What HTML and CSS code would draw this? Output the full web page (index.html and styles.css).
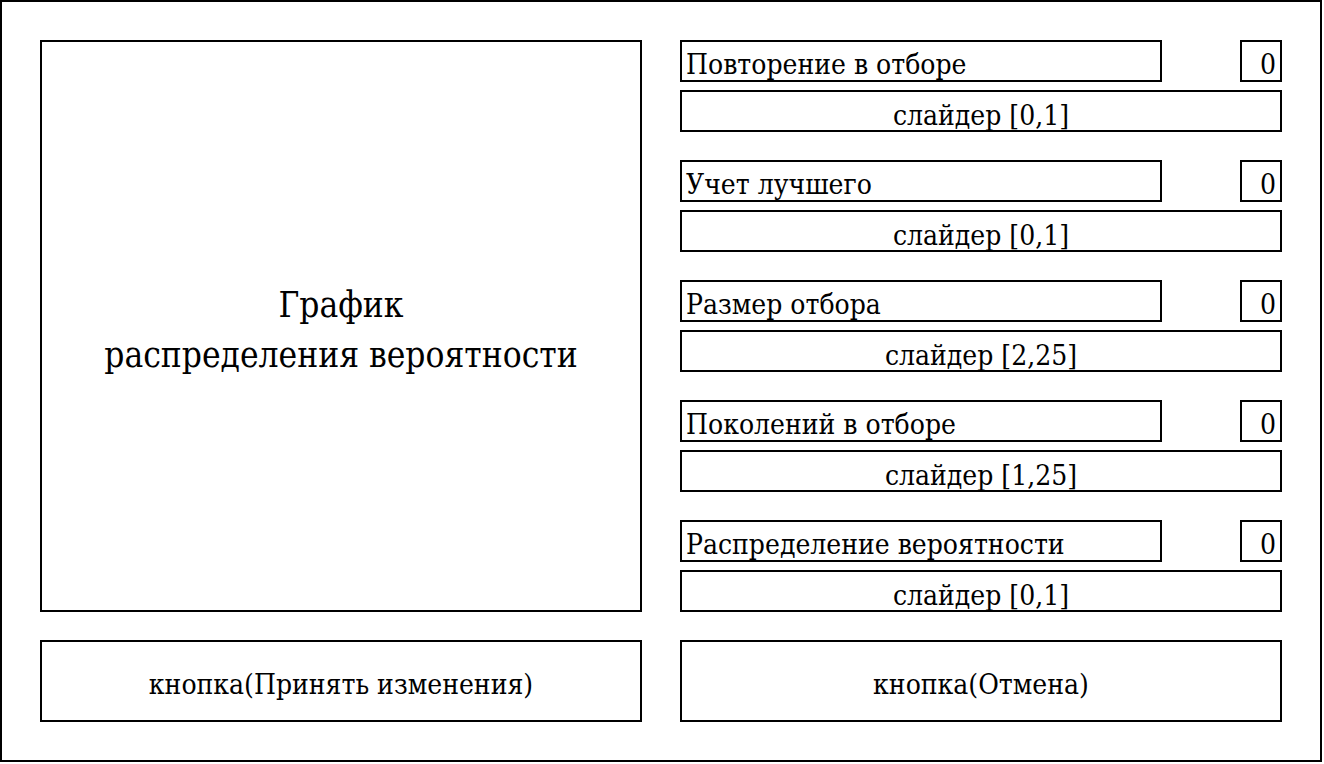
FILE: index.html
```html
<!DOCTYPE html>
<html lang="ru">
<head>
    <meta charset="UTF-8">
    <meta name="viewport" content="width=device-width, initial-scale=1.0">
    <title>Настройки отбора</title>
    <link rel="stylesheet" href="styles.css">
</head>
<body>
    <div class="frame">
        <div class="graph">
            <div class="graph-title">График<br>распределения вероятности</div>
        </div>

        <div class="params">
            <div class="param">
                <div class="param-head">
                    <div class="param-label">Повторение в отборе</div>
                    <div class="param-value">0</div>
                </div>
                <div class="slider">слайдер [0,1]</div>
            </div>
            <div class="param">
                <div class="param-head">
                    <div class="param-label">Учет лучшего</div>
                    <div class="param-value">0</div>
                </div>
                <div class="slider">слайдер [0,1]</div>
            </div>
            <div class="param">
                <div class="param-head">
                    <div class="param-label">Размер отбора</div>
                    <div class="param-value">0</div>
                </div>
                <div class="slider">слайдер [2,25]</div>
            </div>
            <div class="param">
                <div class="param-head">
                    <div class="param-label">Поколений в отборе</div>
                    <div class="param-value">0</div>
                </div>
                <div class="slider">слайдер [1,25]</div>
            </div>
            <div class="param">
                <div class="param-head">
                    <div class="param-label">Распределение вероятности</div>
                    <div class="param-value">0</div>
                </div>
                <div class="slider">слайдер [0,1]</div>
            </div>
        </div>

        <div class="btn">кнопка(Принять изменения)</div>
        <div class="btn">кнопка(Отмена)</div>
    </div>
</body>
</html>
```

FILE: styles.css
```css
body {
    margin: 0;
    background-color: #fff;
    font-family: 'DejaVu Serif', 'Liberation Serif', serif;
    font-stretch: condensed;
    color: #000;
}

.frame {
    width: 1322px;
    height: 762px;
    box-sizing: border-box;
    border: 2px solid #000;
    padding: 38px;
    display: grid;
    grid-template-columns: 602px 602px;
    grid-template-rows: 572px 82px;
    column-gap: 38px;
    row-gap: 28px;
}

.graph {
    border: 2px solid #000;
    display: flex;
    justify-content: center;
    align-items: center;
}

.graph-title {
    font-size: 35px;
    line-height: 50px;
    text-align: center;
    margin-top: 8px;
}

.params {
    display: flex;
    flex-direction: column;
    gap: 28px;
}

.param {
    display: flex;
    flex-direction: column;
    gap: 8px;
}

.param-head {
    display: flex;
    justify-content: space-between;
    height: 42px;
}

.param-label,
.param-value,
.slider {
    box-sizing: border-box;
    border: 2px solid #000;
    font-size: 28px;
    line-height: 30px;
    white-space: nowrap;
}

.param-label {
    width: 482px;
    padding: 8px 4px 0;
}

.param-value {
    width: 42px;
    text-align: right;
    padding: 8px 4px 0;
}

.slider {
    height: 42px;
    text-align: center;
    padding-top: 9px;
}

.btn {
    border: 2px solid #000;
    font-size: 28px;
    padding-top: 6px;
    display: flex;
    justify-content: center;
    align-items: center;
}
```
